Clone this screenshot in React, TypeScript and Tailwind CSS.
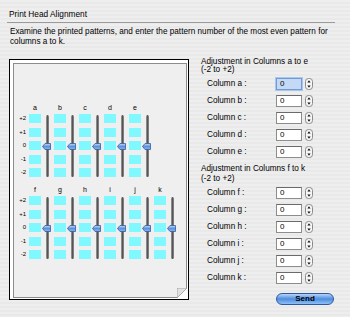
const font = { fontFamily: '"Liberation Sans", Arial, sans-serif' }

const groupA = ['a', 'b', 'c', 'd', 'e']
const groupB = ['f', 'g', 'h', 'i', 'j', 'k']
const levels = ['+2', '+1', '0', '-1', '-2']

function Thumb() {
  return (
    <svg width="9" height="7" viewBox="0 0 9 7" className="absolute left-[-4px] top-[1.5px]">
      <defs>
        <linearGradient id="th" x1="0" y1="0" x2="0" y2="1">
          <stop offset="0" stopColor="#c9dcf6" />
          <stop offset="0.5" stopColor="#5d93dc" />
          <stop offset="1" stopColor="#8fb6ec" />
        </linearGradient>
      </defs>
      <path d="M0.5 3.5 L3 0.5 H8.5 V6.5 H3 Z" fill="url(#th)" stroke="#2f5c9e" strokeWidth="0.8" />
    </svg>
  )
}

function Unit({ letter }: { letter: string }) {
  return (
    <div className="flex flex-col w-[25px]">
      <div className="w-[12px] h-[8px] leading-[8px] text-[7px] text-center text-black">{letter}</div>
      <div className="flex mt-[2px]">
        <div className="flex flex-col gap-[4.5px]">
          {levels.map((l) => (
            <div key={l} className="w-[12px] h-[9px] bg-[#80f8ff]" />
          ))}
        </div>
        <div className="relative ml-[5px] w-[3px] h-[63px]">
          <div className="mx-auto mt-[1px] w-[3px] h-[62px] rounded-full bg-gradient-to-r from-[#a5a5a5] via-[#555555] to-[#939393]" />
          <div className="absolute left-0 top-[27px] h-[9px] w-[3px]">
            <Thumb />
          </div>
        </div>
      </div>
    </div>
  )
}

function Group({ letters }: { letters: string[] }) {
  return (
    <div className="flex">
      <div className="w-[15px] pt-[10px] flex flex-col gap-[4.5px]">
        {levels.map((l) => (
          <div key={l} className="h-[9px] leading-[9px] text-[6px] text-right pr-[3px] text-black">
            {l}
          </div>
        ))}
      </div>
      {letters.map((l) => (
        <Unit key={l} letter={l} />
      ))}
    </div>
  )
}

function Stepper() {
  return (
    <svg width="8" height="12" viewBox="0 0 8 12">
      <rect x="0.5" y="0.5" width="7" height="11" rx="3" fill="#f6f6f6" stroke="#8a8a8a" />
      <path d="M4 2.2 L5.6 4.4 H2.4 Z" fill="#111" />
      <path d="M4 9.8 L5.6 7.6 H2.4 Z" fill="#111" />
    </svg>
  )
}

function Row({ letter, focus }: { letter: string; focus?: boolean }) {
  return (
    <div className="flex items-center h-[12px]">
      <div className="w-[75px] pl-[6px] text-[8.2px] leading-[12px] text-black">Column {letter} :</div>
      <div
        className={
          focus
            ? 'w-[26px] h-[12px] border border-[#6f9bd6] bg-[#c4d9f6] shadow-[0_0_0_1px_#a9c6ee] text-[8px] leading-[10px] pl-[3px] text-black'
            : 'w-[26px] h-[12px] border border-[#8d8d8d] border-t-[#6a6a6a] bg-white text-[8px] leading-[10px] pl-[3px] text-black'
        }
      >
        0
      </div>
      <div className="ml-[3px] flex">
        <Stepper />
      </div>
    </div>
  )
}

export default function App() {
  return (
    <div
      style={font}
      className="w-[350px] h-[317px] overflow-hidden bg-[repeating-linear-gradient(180deg,#eeeeee_0px,#eeeeee_2px,#e9e9e9_2px,#e9e9e9_4px)] text-black"
    >
      <div className="pt-[9px] pl-[9px] text-[8.3px] leading-[10px]">Print Head Alignment</div>
      <div className="ml-[7px] mt-[3px] w-[328px] h-px bg-[#9a9a9a]" />
      <div className="mt-[4px] pl-[10px] pr-[14px] text-[8.2px] leading-[10px]">
        Examine the printed patterns, and enter the pattern number of the most even pattern for columns a to k.
      </div>

      <div className="flex mt-[12px] pl-[9px]">
        <div className="w-[180px] h-[241px] border border-black bg-white pl-[3px] pt-[3px] pr-[1px] pb-[1px]">
          <div className="relative w-full h-full border border-[#8c8c8c] bg-[#efefef] pt-[40px]">
            <Group letters={groupA} />
            <div className="mt-[9px]">
              <Group letters={groupB} />
            </div>
            <svg width="10" height="10" viewBox="0 0 10 10" className="absolute right-[-1px] bottom-[-1px]">
              <path d="M10 0 L10 10 L0 10 Z" fill="#ffffff" />
              <path d="M0 10 L0 0 L10 0 Z" fill="#e2e2e2" stroke="#9a9a9a" strokeWidth="0.8" />
            </svg>
          </div>
        </div>

        <div className="ml-[12px] flex flex-col">
          <div className="-mt-[1px] text-[8.2px] leading-[8px]">
            <div>Adjustment in Columns a to e</div>
            <div>(-2 to +2)</div>
          </div>
          <div className="mt-[4px] flex flex-col gap-[5px]">
            {groupA.map((l, i) => (
              <Row key={l} letter={l} focus={i === 0} />
            ))}
          </div>
          <div className="mt-[6px] text-[8.2px] leading-[10px]">
            <div>Adjustment in Columns f to k</div>
            <div>(-2 to +2)</div>
          </div>
          <div className="mt-[3px] flex flex-col gap-[5px]">
            {groupB.map((l) => (
              <Row key={l} letter={l} />
            ))}
          </div>
          <div className="mt-[9px] ml-[75px] w-[58px] h-[12px] rounded-full border border-[#2b5aa3] bg-gradient-to-b from-[#b9d4f5] via-[#4d8ce0] to-[#8fc0f5] text-[8px] leading-[10px] font-bold text-center">
            Send
          </div>
        </div>
      </div>
    </div>
  )
}
